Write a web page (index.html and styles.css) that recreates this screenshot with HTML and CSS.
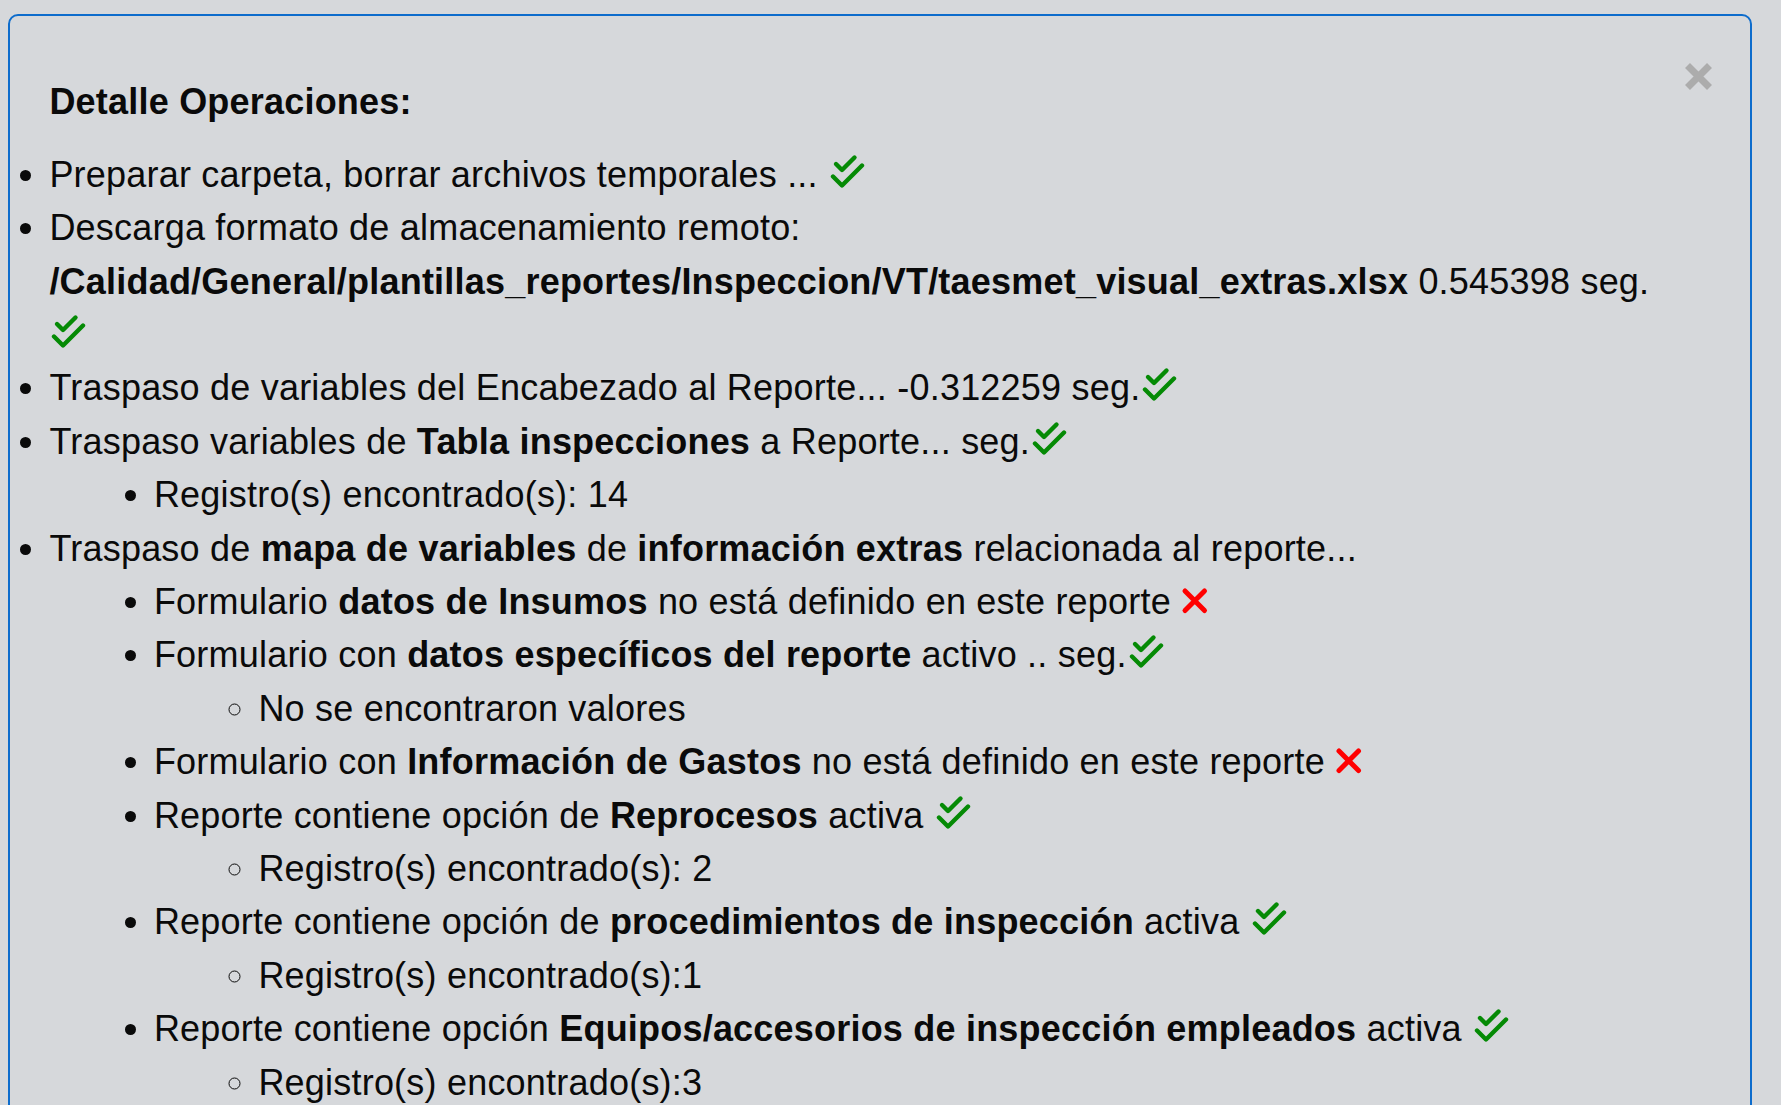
FILE: index.html
```html
<!DOCTYPE html>
<html lang="es">
<head>
<meta charset="utf-8">
<title>Detalle Operaciones</title>
<link rel="stylesheet" href="styles.css">
</head>
<body>
<div class="panel">
  <button class="close" type="button" aria-label="Cerrar">
    <svg width="27" height="27" viewBox="0 0 27 27"><path d="M2.5 2.5 L24.5 24.5 M24.5 2.5 L2.5 24.5"/></svg>
  </button>
  <div class="title">Detalle Operaciones:</div>
  <ul class="ops">
    <li>Preparar carpeta, borrar archivos temporales ... <svg class="ok" viewBox="0 0 38 36"><path d="M8 12 L14 18 L26.5 5.5"/><path d="M5 24.5 L14 33.5 L34 13.5"/></svg></li>
    <li>Descarga formato de almacenamiento remoto: <b>/Calidad/General/plantillas_reportes/Inspeccion/VT/taesmet_visual_extras.xlsx</b> 0.545398 seg. <svg class="ok" viewBox="0 0 38 36"><path d="M8 12 L14 18 L26.5 5.5"/><path d="M5 24.5 L14 33.5 L34 13.5"/></svg></li>
    <li>Traspaso de variables del Encabezado al Reporte... -0.312259 seg.<svg class="ok" viewBox="0 0 38 36"><path d="M8 12 L14 18 L26.5 5.5"/><path d="M5 24.5 L14 33.5 L34 13.5"/></svg></li>
    <li>Traspaso variables de <b>Tabla inspecciones</b> a Reporte... seg.<svg class="ok" viewBox="0 0 38 36"><path d="M8 12 L14 18 L26.5 5.5"/><path d="M5 24.5 L14 33.5 L34 13.5"/></svg>
      <ul>
        <li>Registro(s) encontrado(s): 14</li>
      </ul>
    </li>
    <li>Traspaso de <b>mapa de variables</b> de <b>información extras</b> relacionada al reporte...
      <ul>
        <li>Formulario <b>datos de Insumos</b> no está definido en este reporte <svg class="no" viewBox="0 0 28 28"><path d="M4 4 L23.5 23.5 M23.5 4 L4 23.5"/></svg></li>
        <li>Formulario con <b>datos específicos del reporte</b> activo .. seg.<svg class="ok" viewBox="0 0 38 36"><path d="M8 12 L14 18 L26.5 5.5"/><path d="M5 24.5 L14 33.5 L34 13.5"/></svg>
          <ul>
            <li>No se encontraron valores</li>
          </ul>
        </li>
        <li>Formulario con <b>Información de Gastos</b> no está definido en este reporte <svg class="no" viewBox="0 0 28 28"><path d="M4 4 L23.5 23.5 M23.5 4 L4 23.5"/></svg></li>
        <li>Reporte contiene opción de <b>Reprocesos</b> activa <svg class="ok" viewBox="0 0 38 36"><path d="M8 12 L14 18 L26.5 5.5"/><path d="M5 24.5 L14 33.5 L34 13.5"/></svg>
          <ul>
            <li>Registro(s) encontrado(s): 2</li>
          </ul>
        </li>
        <li>Reporte contiene opción de <b>procedimientos de inspección</b> activa <svg class="ok" viewBox="0 0 38 36"><path d="M8 12 L14 18 L26.5 5.5"/><path d="M5 24.5 L14 33.5 L34 13.5"/></svg>
          <ul>
            <li>Registro(s) encontrado(s):1</li>
          </ul>
        </li>
        <li>Reporte contiene opción <b>Equipos/accesorios de inspección empleados</b> activa <svg class="ok" viewBox="0 0 38 36"><path d="M8 12 L14 18 L26.5 5.5"/><path d="M5 24.5 L14 33.5 L34 13.5"/></svg>
          <ul>
            <li>Registro(s) encontrado(s):3</li>
          </ul>
        </li>
      </ul>
    </li>
  </ul>
</div>
</body>
</html>
```

FILE: styles.css
```css
html, body {
  margin: 0;
  background: #d6d8db;
}
body {
  padding: 14px 29px 0 8px;
  font-family: "Liberation Sans", Arial, sans-serif;
  font-size: 36px;
  line-height: 53.4px;
  letter-spacing: 0.21px;
  color: #0a0a0a;
  overflow: hidden;
}
.panel {
  position: relative;
  border: 2px solid #0d6ccc;
  border-radius: 10px;
  padding: 59px 68px 40px 39.4px;
  min-height: 1200px;
}
.close {
  position: absolute;
  top: 47px;
  right: 38px;
  padding: 0;
  margin: 0;
  border: 0;
  background: none;
  line-height: 0;
  cursor: pointer;
}
.close svg {
  display: block;
}
.close path {
  stroke: #acacac;
  stroke-width: 7;
  fill: none;
}
.title {
  font-weight: 700;
  margin-bottom: 19.3px;
}
.ops {
  margin: 0;
  padding: 0;
  list-style: disc;
}
.ops ul {
  margin: 0;
  padding-left: 104.5px;
  list-style: disc;
}
.ops ul ul {
  list-style: circle;
}
b {
  font-weight: 700;
}
svg.ok {
  width: 38px;
  height: 36px;
  vertical-align: -1px;
}
svg.ok path {
  fill: none;
  stroke: #058a05;
  stroke-width: 4.4;
  stroke-linecap: round;
  stroke-linejoin: round;
}
svg.no {
  width: 28px;
  height: 28px;
  vertical-align: -1px;
}
svg.no path {
  fill: none;
  stroke: #ff0000;
  stroke-width: 5;
  stroke-linecap: round;
}
```
